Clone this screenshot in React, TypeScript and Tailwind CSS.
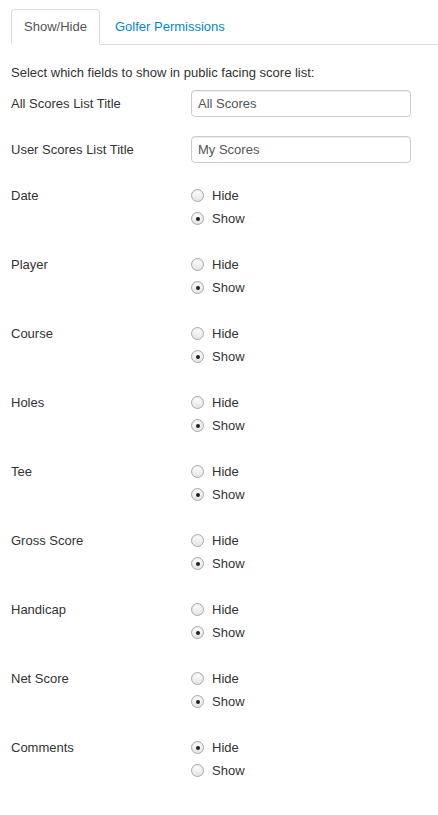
const fields: { label: string; show: boolean }[] = [
  { label: "Date", show: true },
  { label: "Player", show: true },
  { label: "Course", show: true },
  { label: "Holes", show: true },
  { label: "Tee", show: true },
  { label: "Gross Score", show: true },
  { label: "Handicap", show: true },
  { label: "Net Score", show: true },
  { label: "Comments", show: false },
];

const Radio = ({ checked, text }: { checked: boolean; text: string }) => (
  <div className="flex h-[23px] items-center">
    <span className="flex h-[13px] w-[13px] items-center justify-center rounded-full border border-[#a9a9a9] bg-gradient-to-b from-white to-[#e4e4e4] shadow-[inset_0_1px_1px_rgba(0,0,0,0.08)]">
      {checked && <span className="h-[4px] w-[4px] rounded-full bg-[#222]" />}
    </span>
    <span className="ml-[8px]">{text}</span>
  </div>
);

const App = () => {
  return (
    <div className="min-h-[815px] bg-white pl-[11px] text-[13px] leading-[18px] text-[#333] [font-family:'Liberation_Sans',Arial,sans-serif]">
      <div className="flex pt-[9px] border-b border-[#ddd]">
        <div className="-mb-px flex h-[36px] w-[89px] items-center justify-center rounded-t-[4px] border border-b-white border-[#ddd] bg-white text-[#555]">
          Show/Hide
        </div>
        <div className="flex h-[35px] items-center px-[15px] text-[#0088cc]">
          Golfer Permissions
        </div>
      </div>

      <p className="mt-[19px]">Select which fields to show in public facing score list:</p>

      <div className="mt-[8px] flex flex-col gap-[19px]">
        {[
          ["All Scores List Title", "All Scores"],
          ["User Scores List Title", "My Scores"],
        ].map(([label, value]) => (
          <div key={label} className="flex items-center">
            <div className="w-[180px]">{label}</div>
            <input
              readOnly
              value={value}
              className="h-[27px] w-[220px] rounded-[4px] border border-[#ccc] px-[6px] text-[13px] text-[#555] shadow-[inset_0_1px_1px_rgba(0,0,0,0.075)] outline-none"
            />
          </div>
        ))}
      </div>

      <div className="mt-[21px] flex flex-col gap-[23px]">
        {fields.map((f) => (
          <div key={f.label} className="flex">
            <div className="flex h-[23px] w-[180px] items-center">{f.label}</div>
            <div className="flex flex-col">
              <Radio checked={!f.show} text="Hide" />
              <Radio checked={f.show} text="Show" />
            </div>
          </div>
        ))}
      </div>
    </div>
  );
};

export default App;
